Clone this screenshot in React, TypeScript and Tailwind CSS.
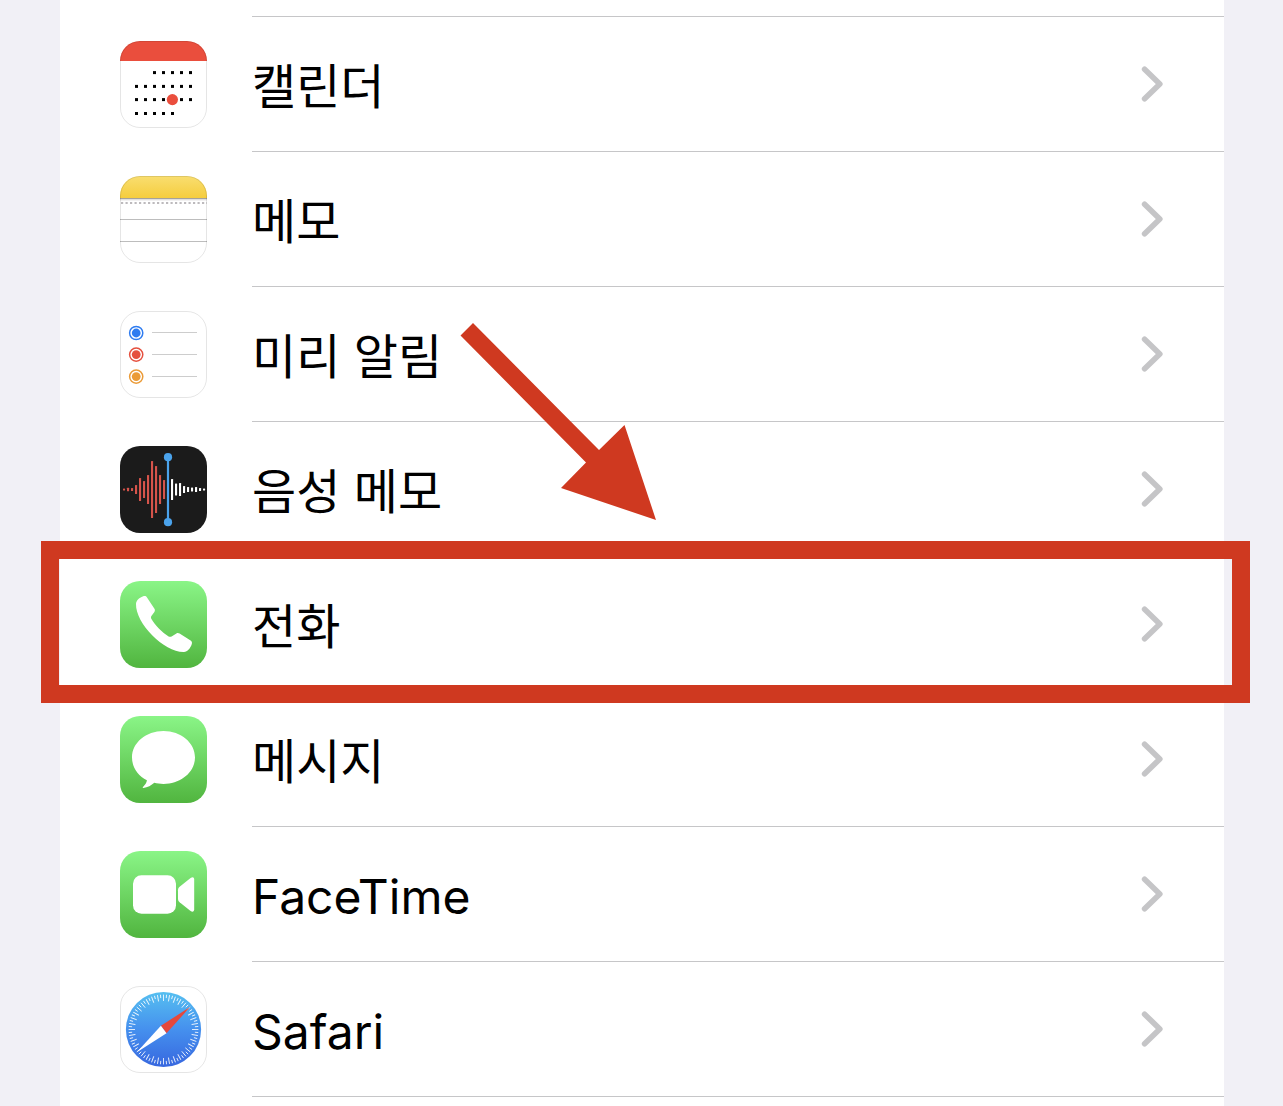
import React from "react";

// Shared rounded tile behind every app icon
const Tile: React.FC<{ id: string; fill: string; outline?: boolean; children: React.ReactNode }> = ({
  id,
  fill,
  outline,
  children,
}) => (
  <svg viewBox="0 0 87 87" className="h-[87px] w-[87px] shrink-0" aria-hidden="true">
    <defs>
      <clipPath id={`${id}-clip`}>
        <rect width="87" height="87" rx="20" />
      </clipPath>
      <linearGradient id={`${id}-green`} x1="0" y1="0" x2="0" y2="1">
        <stop offset="0" stopColor="#8af587" />
        <stop offset="1" stopColor="#51b53f" />
      </linearGradient>
    </defs>
    <g clipPath={`url(#${id}-clip)`}>
      <rect width="87" height="87" fill={fill} />
      {children}
    </g>
    {outline && (
      <rect x="0.5" y="0.5" width="86" height="86" rx="19.5" fill="none" stroke="#000" strokeOpacity="0.1" />
    )}
  </svg>
);

// --- Calendar ---
const CALENDAR_ROWS = [
  { y: 31.6, cols: [2, 3, 4, 5, 6] },
  { y: 45.4, cols: [0, 1, 2, 3, 4, 5, 6] },
  { y: 58.6, cols: [0, 1, 2, 3, 5, 6] },
  { y: 72.5, cols: [0, 1, 2, 3, 4] },
];

const CalendarIcon = () => (
  <Tile id="calendar" fill="#fff" outline>
    <rect width="87" height="20" fill="#ea4e3d" />
    {CALENDAR_ROWS.map((row) =>
      row.cols.map((col) => (
        <rect key={`${row.y}-${col}`} x={15 + col * 9} y={row.y - 1.5} width="3" height="3" fill="#000" />
      ))
    )}
    <circle cx="52.4" cy="58.6" r="5.6" fill="#ea4e3d" />
  </Tile>
);

// --- Notes ---
const NotesIcon = () => (
  <Tile id="notes" fill="#fff" outline>
    <defs>
      <linearGradient id="notes-yellow" x1="0" y1="0" x2="0" y2="1">
        <stop offset="0" stopColor="#f9de70" />
        <stop offset="1" stopColor="#f5cd3e" />
      </linearGradient>
    </defs>
    <rect width="87" height="22" fill="url(#notes-yellow)" />
    <rect y="22" width="87" height="1.2" fill="#a5a29a" />
    <rect y="23.2" width="87" height="1.2" fill="#dedddd" />
    <path d="M1 27H87" stroke="#bdbabd" strokeWidth="2.2" strokeDasharray="2.2 2.3" />
    <path d="M0 43.5H87M0 65.5H87" stroke="#bdbdbd" strokeWidth="1" />
  </Tile>
);

// --- Reminders ---
const REMINDERS = [
  { y: 22, lineY: 21.5, color: "#2f7cf0" },
  { y: 43.6, lineY: 43.5, color: "#e5503f" },
  { y: 65.6, lineY: 65.5, color: "#eb9b37" },
];

const RemindersIcon = () => (
  <Tile id="reminders" fill="#fff" outline>
    {REMINDERS.map((item) => (
      <g key={item.color}>
        <circle cx="16.2" cy={item.y} r="6.6" fill="none" stroke={item.color} strokeWidth="1.5" />
        <circle cx="16.2" cy={item.y} r="4.4" fill={item.color} />
        <path d={`M32 ${item.lineY}H77`} stroke="#cdcdcd" />
      </g>
    ))}
  </Tile>
);

// --- Voice Memos ---
const RED_BARS = [2, 3.5, 3, 9, 23, 17, 29, 57, 47, 29, 19];
const WHITE_BARS = [21, 12, 13, 7, 5, 4, 5, 3, 2];

const VoiceMemosIcon = () => (
  <Tile id="voice" fill="#1b1b1b">
    {RED_BARS.map((h, i) => (
      <rect key={i} x={3 + i * 4} y={43.5 - h / 2} width="2.1" height={h} rx="0.6" fill="#d6544b" />
    ))}
    {WHITE_BARS.map((h, i) => (
      <rect key={i} x={51 + i * 4} y={43.5 - h / 2} width="2.1" height={h} rx="0.6" fill="#fff" />
    ))}
    <path d="M48 11V76" stroke="#4ba3ec" strokeWidth="2.2" />
    <circle cx="48" cy="11.2" r="4.1" fill="#4ba3ec" />
    <circle cx="48" cy="76.2" r="4.1" fill="#4ba3ec" />
  </Tile>
);

// --- Phone ---
const PhoneIcon = () => (
  <Tile id="phone" fill="url(#phone-green)">
    <path
      fill="#fff"
      d="M16 23C16.1 19.6 18.8 17 23.2 15.2C24.8 14.6 26.1 15 27 16.4L34.3 27.6C35.1 28.8 35.1 29.8 34.4 31L31.4 35C30.8 36 30.8 36.8 31.3 37.8C34.6 43.7 42.4 51.9 48.6 55.4C49.6 56 50.6 56 51.6 55.4L56.4 52.5C57.5 51.9 58.4 51.9 59.6 52.6L70.6 59.5C71.9 60.4 72.3 61.6 71.8 63.1C70.3 67.6 67.6 70.9 64 71C44.5 71.5 15.4 42.5 16 23Z"
    />
  </Tile>
);

// --- Messages ---
const MessagesIcon = () => (
  <Tile id="messages" fill="url(#messages-green)">
    <path
      fill="#fff"
      d="M43.5 15C61 15 75 26.8 75 41.4C75 56 61 67.9 43.5 67.9C40.1 67.9 37 67.5 34.3 66.8C31.4 69.4 27.5 71.6 23.4 72C22.6 72 22.4 71.5 23 70.9C25.1 69 26.7 66.8 26.9 64.3C18 60 12 51.3 12 41.4C12 26.8 26 15 43.5 15Z"
    />
  </Tile>
);

// --- FaceTime ---
const FaceTimeIcon = () => (
  <Tile id="facetime" fill="url(#facetime-green)">
    <rect x="13" y="24.2" width="43" height="38.6" rx="8.5" fill="#fff" />
    <path
      fill="#fff"
      d="M58 39.2C58 37.6 58.5 36.6 59.6 35.7L70.6 27C72.5 25.6 74.2 26.2 74.2 28.5V58.3C74.2 60.7 72.5 61.5 70.6 60L59.6 51.2C58.5 50.3 58 49.2 58 47.8Z"
    />
  </Tile>
);

// --- Safari ---
const TICKS = Array.from({ length: 72 }, (_, i) => i);

const SafariIcon = () => (
  <Tile id="safari" fill="#fff" outline>
    <defs>
      <linearGradient id="safari-blue" x1="0" y1="0" x2="0" y2="1">
        <stop offset="0" stopColor="#56bff0" />
        <stop offset="0.5" stopColor="#4590ee" />
        <stop offset="1" stopColor="#3767df" />
      </linearGradient>
    </defs>
    <circle cx="43.5" cy="43.5" r="37.6" fill="url(#safari-blue)" />
    {TICKS.map((i) => (
      <path
        key={i}
        d={i % 2 === 0 ? "M43.5 8.6V15" : "M43.5 8.6V12"}
        stroke="#fff"
        strokeOpacity="0.9"
        strokeWidth="0.9"
        transform={`rotate(${i * 5} 43.5 43.5)`}
      />
    ))}
    <path d="M70.3 20.8L40.9 39.8L46.5 47.2Z" fill="#e5483c" />
    <path d="M16.8 66.2L40.9 39.8L46.5 47.2Z" fill="#fff" />
  </Tile>
);

const Chevron = () => (
  <svg viewBox="0 0 22 36" className="h-9 w-[22px] shrink-0" fill="none" aria-hidden="true">
    <path d="M3.6 3.2L18.8 18L3.6 32.8" stroke="#c5c5c7" strokeWidth="5.6" strokeLinecap="round" strokeLinejoin="round" />
  </svg>
);

// Red frame plus pointer drawn over the highlighted row
const Callout = () => (
  <div className="pointer-events-none absolute -top-4 -right-[26px] -bottom-[11px] -left-[19px] z-10 border-[18px] border-[#cf3920]">
    <svg viewBox="0 0 196 197" className="absolute -top-[236px] left-[401px] h-[197px] w-[196px]" aria-hidden="true">
      <path d="M13 0L0.5 12.5L126 139.5L101 165L196 197L164.5 102L139 127Z" fill="#cf3920" />
    </svg>
  </div>
);

interface AppRow {
  label: string;
  icon: React.FC;
  highlighted?: boolean;
}

const APPS: AppRow[] = [
  { label: "캘린더", icon: CalendarIcon },
  { label: "메모", icon: NotesIcon },
  { label: "미리 알림", icon: RemindersIcon },
  { label: "음성 메모", icon: VoiceMemosIcon },
  { label: "전화", icon: PhoneIcon, highlighted: true },
  { label: "메시지", icon: MessagesIcon },
  { label: "FaceTime", icon: FaceTimeIcon },
  { label: "Safari", icon: SafariIcon },
];

const App: React.FC = () => {
  return (
    <main className="min-h-screen overflow-hidden bg-[#f1f0f6] pr-[59px] pl-[60px] font-['Inter','Noto_Sans_CJK_KR',sans-serif] text-black">
      <div className="min-h-screen bg-white pt-4">
        <div className="ml-48 border-t border-[#c6c6c8]" />
        <ul>
          {APPS.map(({ label, icon: Icon, highlighted }) => (
            <li key={label} className="relative">
              <a href="#" className="flex h-[135px] items-stretch gap-[45px] pl-[60px]">
                <span className="flex items-center pb-px">
                  <Icon />
                </span>
                <span className="flex flex-1 items-center justify-between border-b border-[#c6c6c8] pr-[61px]">
                  <span className="pt-1.5 text-5xl leading-none">{label}</span>
                  <Chevron />
                </span>
              </a>
              {highlighted && <Callout />}
            </li>
          ))}
        </ul>
      </div>
    </main>
  );
};

export default App;
